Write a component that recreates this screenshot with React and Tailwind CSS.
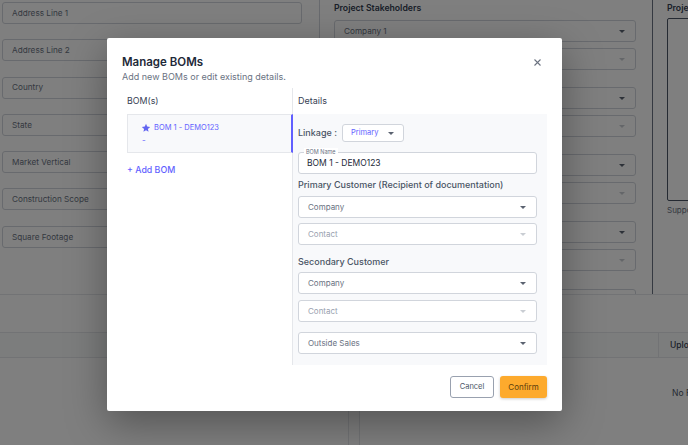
import React from "react";

const Caret = ({ light }) => (
  <svg width="6" height="3" viewBox="0 0 6 3" className="shrink-0">
    <path d="M0 0h6L3 3z" fill={light ? "#c9cdd3" : "#5b6270"} />
  </svg>
);

function BgInput({ label }) {
  return (
    <div className="h-[22px] w-[300px] rounded-[3px] border border-gray-300 flex items-center pl-[9px] text-[8.2px] text-gray-500">
      {label}
    </div>
  );
}

function BgSelect({ label, light }) {
  return (
    <div className="h-[22px] w-[302px] rounded-[3px] border border-gray-300 flex items-center justify-between pl-[9px] pr-[10px] text-[8.2px] text-gray-500">
      <span>{label}</span>
      <Caret light={light} />
    </div>
  );
}

function BgPair({ first, mt }) {
  return (
    <div className={`flex flex-col gap-[6px] ${mt}`}>
      <BgSelect label={first} />
      <BgSelect light />
    </div>
  );
}

function Field({ label, placeholder, mt }) {
  return (
    <div
      className={`h-[22px] rounded-[3px] border border-gray-300 bg-white flex items-center justify-between pl-[9px] pr-[10px] ${mt}`}
    >
      <span className={`text-[8px] ${placeholder ? "text-gray-400" : "text-gray-500"}`}>{label}</span>
      <Caret light={placeholder} />
    </div>
  );
}

export default function App() {
  return (
    <div className="w-[688px] h-[445px] relative overflow-hidden bg-white font-[Inter,sans-serif]">
      {/* Background page */}
      <div className="flex h-[295px] overflow-hidden border-b border-gray-200">
        <div className="w-[320px] shrink-0 border-r border-gray-300 pl-[2px] pt-[2px] flex flex-col gap-[15.3px]">
          <BgInput label="Address Line 1" />
          <BgInput label="Address Line 2" />
          <BgInput label="Country" />
          <BgInput label="State" />
          <BgInput label="Market Vertical" />
          <BgInput label="Construction Scope" />
          <BgInput label="Square Footage" />
        </div>
        <div className="w-[333px] shrink-0 border-r border-gray-500 pl-[14px] pt-[2px]">
          <div className="text-[8.7px] leading-[12px] font-semibold text-gray-700">Project Stakeholders</div>
          <BgPair first="Company 1" mt="mt-[6px]" />
          <BgPair mt="mt-[17px]" />
          <BgPair mt="mt-[17px]" />
          <BgPair mt="mt-[17px]" />
          <BgPair mt="mt-[18px]" />
        </div>
        <div className="w-[120px] shrink-0 pl-[14px] pt-[2px] whitespace-nowrap">
          <div className="text-[8.7px] leading-[12px] font-semibold text-gray-700">Project Documents</div>
          <div className="mt-[4px] h-[183px] w-[90px] rounded-[2px] border border-gray-600"></div>
          <div className="mt-[3px] text-[8px] leading-[12px] text-gray-500">Supported files</div>
        </div>
      </div>
      <div className="h-[37px]"></div>
      <div className="flex h-[26px] border-y border-gray-200 bg-gray-50">
        <div className="w-[658px] shrink-0"></div>
        <div className="w-[120px] shrink-0 border-l border-gray-200 pl-[11px] flex items-center text-[8.5px] font-medium text-gray-700 whitespace-nowrap">
          Upload Date
        </div>
      </div>
      <div className="flex h-[87px]">
        <div className="w-[348px] shrink-0"></div>
        <div className="w-[11px] shrink-0 border-l border-gray-200"></div>
        <div className="w-[420px] shrink-0 border-l border-gray-200 pl-[312px] pt-[29px] text-[8.5px] leading-[12px] text-gray-600 whitespace-nowrap">
          No Records Found
        </div>
      </div>

      {/* Overlay */}
      <div className="absolute inset-0 bg-black/50"></div>

      {/* Modal */}
      <div className="absolute left-[107px] top-[38px] w-[455px] h-[373px] bg-white rounded-[2px] shadow-[0_12px_40px_rgba(0,0,0,0.35)] flex flex-col">
        <div className="flex justify-between pl-[15px] pr-[21px] pt-[16px]">
          <div>
            <h2 className="text-[11.5px] leading-[16px] font-semibold text-gray-800">Manage BOMs</h2>
            <p className="mt-[1px] text-[9px] leading-[12px] text-gray-500">Add new BOMs or edit existing details.</p>
          </div>
          <svg width="7" height="7" viewBox="0 0 7 7" className="mt-[5px]">
            <path d="M0.5 0.5l6 6M6.5 0.5l-6 6" stroke="#6b7280" strokeWidth="1.1" />
          </svg>
        </div>

        <div className="flex mx-[15px] mt-[5px]">
          {/* Left column */}
          <div className="w-[171px] shrink-0 border-r border-gray-200">
            <div className="h-[26px] pl-[5px] flex items-center text-[8.8px] text-gray-700">BOM(s)</div>
            <div className="ml-[5px] mr-[-1px] h-[39px] bg-[#f8f9fb] border border-gray-200 border-r-2 border-r-indigo-500 pl-[13px] pt-[7px]">
              <div className="flex items-center gap-[3px] h-[12px]">
                <svg width="10" height="10" viewBox="0 0 24 24">
                  <path
                    d="M12 2l2.9 6.6 7.1.7-5.4 4.8 1.6 7-6.2-3.7-6.2 3.7 1.6-7L2 9.3l7.1-.7z"
                    fill="#6366f1"
                  />
                </svg>
                <span className="text-[7.5px] text-indigo-500">BOM 1 - DEMO123</span>
              </div>
              <div className="text-[8px] leading-[12px] text-indigo-500 pl-[1px]">-</div>
            </div>
            <div className="mt-[11px] pl-[5px] text-[8.8px] leading-[12px] font-medium text-indigo-500">+ Add BOM</div>
          </div>

          {/* Right column */}
          <div className="flex-1 min-w-0">
            <div className="h-[26px] pl-[5px] flex items-center text-[9px] text-gray-700">Details</div>
            <div className="bg-[#f8f9fb] pl-[5px] pr-[10px] pt-[10px] pb-[11px]">
              <div className="flex items-center h-[18px]">
                <span className="w-[44px] text-[9px] font-medium text-gray-600">Linkage :</span>
                <div className="w-[62px] h-[18px] rounded-[3px] border border-gray-300 bg-white flex items-center justify-between pl-[8px] pr-[9px]">
                  <span className="text-[7.5px] text-indigo-500">Primary</span>
                  <Caret />
                </div>
              </div>
              <div className="relative mt-[10px] h-[22px] rounded-[3px] border border-gray-300 bg-white flex items-center pl-[8px]">
                <span className="absolute left-[5px] top-[-5px] bg-white px-[2px] text-[5.5px] leading-[8px] text-gray-500">BOM Name</span>
                <span className="text-[8.5px] text-gray-800">BOM 1 - DEMO123</span>
              </div>
              <div className="mt-[5px] text-[9px] leading-[12px] font-medium text-gray-600">
                Primary Customer (Recipient of documentation)
              </div>
              <Field label="Company" mt="mt-[5px]" />
              <Field label="Contact" placeholder mt="mt-[5px]" />
              <div className="mt-[11px] text-[9px] leading-[12px] font-medium text-gray-600">Secondary Customer</div>
              <Field label="Company" mt="mt-[4px]" />
              <Field label="Contact" placeholder mt="mt-[6px]" />
              <Field label="Outside Sales" mt="mt-[10px]" />
            </div>
          </div>
        </div>

        <div className="flex justify-end gap-[6px] pr-[15px] mt-[11px]">
          <button className="w-[44px] h-[22px] rounded-[3px] border border-gray-400 bg-white text-[7.5px] text-gray-600">
            Cancel
          </button>
          <button className="w-[47px] h-[22px] rounded-[3px] bg-[#fdaa2d] text-[8px] text-[#5b3d0c] shadow-[0_1px_3px_rgba(0,0,0,0.2)]">
            Confirm
          </button>
        </div>
      </div>
    </div>
  );
}
